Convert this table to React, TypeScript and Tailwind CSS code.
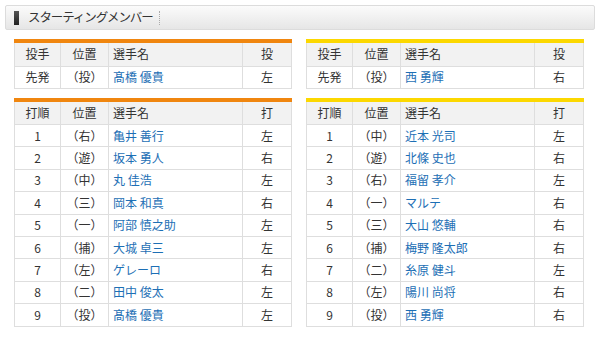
import React from "react";

type Row = { a: string; b: string; name: string; d: string };

const leftPitcher: Row[] = [{ a: "先発", b: "（投）", name: "髙橋 優貴", d: "左" }];
const rightPitcher: Row[] = [{ a: "先発", b: "（投）", name: "西 勇輝", d: "右" }];

const leftBat: Row[] = [
  { a: "1", b: "（右）", name: "亀井 善行", d: "左" },
  { a: "2", b: "（遊）", name: "坂本 勇人", d: "右" },
  { a: "3", b: "（中）", name: "丸 佳浩", d: "左" },
  { a: "4", b: "（三）", name: "岡本 和真", d: "右" },
  { a: "5", b: "（一）", name: "阿部 慎之助", d: "左" },
  { a: "6", b: "（捕）", name: "大城 卓三", d: "左" },
  { a: "7", b: "（左）", name: "ゲレーロ", d: "右" },
  { a: "8", b: "（二）", name: "田中 俊太", d: "左" },
  { a: "9", b: "（投）", name: "髙橋 優貴", d: "左" },
];

const rightBat: Row[] = [
  { a: "1", b: "（中）", name: "近本 光司", d: "左" },
  { a: "2", b: "（遊）", name: "北條 史也", d: "右" },
  { a: "3", b: "（右）", name: "福留 孝介", d: "左" },
  { a: "4", b: "（一）", name: "マルテ", d: "右" },
  { a: "5", b: "（三）", name: "大山 悠輔", d: "右" },
  { a: "6", b: "（捕）", name: "梅野 隆太郎", d: "右" },
  { a: "7", b: "（二）", name: "糸原 健斗", d: "左" },
  { a: "8", b: "（左）", name: "陽川 尚将", d: "右" },
  { a: "9", b: "（投）", name: "西 勇輝", d: "右" },
];

function Table({
  head,
  rows,
  bar,
  tall,
}: {
  head: [string, string, string, string];
  rows: Row[];
  bar: "orange" | "yellow";
  tall?: boolean;
}) {
  const barCls = bar === "orange" ? "border-t-[#f0860f]" : "border-t-[#fcd800]";
  const rowH = tall ? "h-[22.4px]" : "h-[22px]";
  return (
    <div className={`border-t-4 ${barCls}`}>
      <table className="w-full border-collapse table-fixed text-[12px] text-[#333]">
        <colgroup>
          <col className="w-[46px]" />
          <col className="w-[48px]" />
          <col />
          <col className="w-[49px]" />
        </colgroup>
        <thead>
          <tr className="h-[23px] bg-[#f2f2f2]">
            <th className="border border-[#dedede] border-t-0 font-normal text-center">{head[0]}</th>
            <th className="border border-[#dedede] border-t-0 font-normal text-center">{head[1]}</th>
            <th className="border border-[#dedede] border-t-0 font-normal text-left pl-[4px]">{head[2]}</th>
            <th className="border border-[#dedede] border-t-0 font-normal text-center">{head[3]}</th>
          </tr>
        </thead>
        <tbody>
          {rows.map((r, i) => (
            <tr key={i} className={`${rowH} bg-white`}>
              <td className="border border-[#dedede] text-center p-0">{r.a}</td>
              <td className="border border-[#dedede] text-center p-0">{r.b}</td>
              <td className="border border-[#dedede] text-left pl-[4px] p-0 text-[#1d6fb5]">{r.name}</td>
              <td className="border border-[#dedede] text-center p-0">{r.d}</td>
            </tr>
          ))}
        </tbody>
      </table>
    </div>
  );
}

export default function App() {
  return (
    <div
      className="w-[600px] h-[340px] bg-white overflow-hidden"
      style={{ fontFamily: '"Noto Sans CJK JP", "Noto Sans", sans-serif' }}
    >
      <div className="pt-[5px] pl-[5px] pr-[5px]">
        <div className="h-[25px] rounded-[2px] border border-[#dcdcdc] bg-gradient-to-b from-[#fbfbfb] to-[#e6e6e6] flex items-center pl-[8px]">
          <div className="w-[5px] h-[14px] bg-gradient-to-b from-[#555] to-[#222] mr-[9px]" />
          <span className="text-[12.5px] text-[#333] leading-none tracking-[-1.1px]">スターティングメンバー</span>
          <div className="ml-[6px] h-[14px] border-l border-dotted border-[#aaa]" />
        </div>
      </div>
      <div className="grid grid-cols-2 gap-x-[14px] pl-[14px] pr-[16px] mt-[9px]">
        <Table head={["投手", "位置", "選手名", "投"]} rows={leftPitcher} bar="orange" />
        <Table head={["投手", "位置", "選手名", "投"]} rows={rightPitcher} bar="yellow" />
      </div>
      <div className="grid grid-cols-2 gap-x-[14px] pl-[14px] pr-[16px] mt-[9px]">
        <Table head={["打順", "位置", "選手名", "打"]} rows={leftBat} bar="orange" tall />
        <Table head={["打順", "位置", "選手名", "打"]} rows={rightBat} bar="yellow" tall />
      </div>
    </div>
  );
}
